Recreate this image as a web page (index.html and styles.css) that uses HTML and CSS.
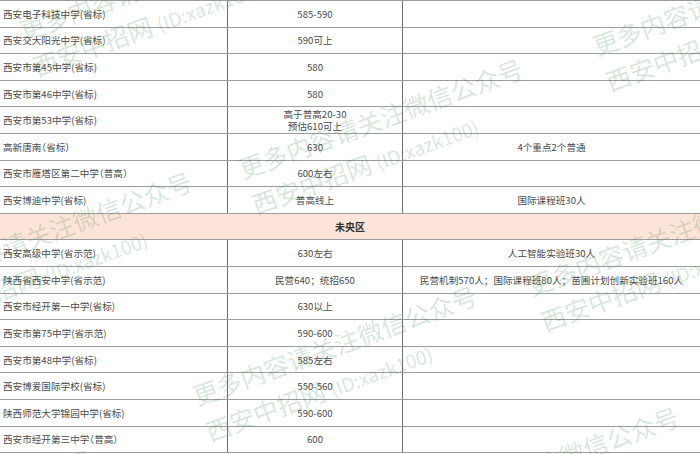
FILE: index.html
```html
<!DOCTYPE html>
<html lang="zh-CN">
<head>
<meta charset="utf-8">
<title>西安中考分数线</title>
<link rel="stylesheet" href="styles.css">
</head>
<body>
<div class="page">
  <div class="sheet">
    <div class="row"><div class="c name">西安电子科技中学(省标)</div><div class="c score">585-590</div><div class="c note"></div></div>
    <div class="row"><div class="c name">西安交大阳光中学(省标)</div><div class="c score">590可上</div><div class="c note"></div></div>
    <div class="row"><div class="c name">西安市第45中学(省标)</div><div class="c score">580</div><div class="c note"></div></div>
    <div class="row"><div class="c name">西安市第46中学(省标)</div><div class="c score">580</div><div class="c note"></div></div>
    <div class="row"><div class="c name">西安市第53中学(省标)</div><div class="c score two">高于普高20-30<br>预估610可上</div><div class="c note"></div></div>
    <div class="row"><div class="c name">高新唐南（省标）</div><div class="c score">630</div><div class="c note">4个重点2个普通</div></div>
    <div class="row"><div class="c name">西安市雁塔区第二中学（普高）</div><div class="c score">600左右</div><div class="c note"></div></div>
    <div class="row"><div class="c name">西安博迪中学(省标)</div><div class="c score">普高线上</div><div class="c note">国际课程班30人</div></div>
    <div class="row region"><div class="c full">未央区</div></div>
    <div class="row"><div class="c name">西安高级中学(省示范)</div><div class="c score">630左右</div><div class="c note">人工智能实验班30人</div></div>
    <div class="row"><div class="c name">陕西省西安中学(省示范)</div><div class="c score">民营640；统招650</div><div class="c note">民营机制570人；国际课程班80人；苗圃计划创新实验班160人</div></div>
    <div class="row"><div class="c name">西安市经开第一中学(省标)</div><div class="c score">630以上</div><div class="c note"></div></div>
    <div class="row"><div class="c name">西安市第75中学(省示范)</div><div class="c score">590-600</div><div class="c note"></div></div>
    <div class="row"><div class="c name">西安市第48中学(省标)</div><div class="c score">585左右</div><div class="c note"></div></div>
    <div class="row"><div class="c name">西安博爱国际学校(省标)</div><div class="c score">550-560</div><div class="c note"></div></div>
    <div class="row"><div class="c name">陕西师范大学锦园中学(省标)</div><div class="c score">590-600</div><div class="c note"></div></div>
    <div class="row"><div class="c name">西安市经开第三中学（普高）</div><div class="c score">600</div><div class="c note"></div></div>
  </div>

  <div class="wm" style="left:14px;top:13px">更多内容请关注微信公众号<br>西安中招网 <span class="id">(ID:xazk100)</span></div>
  <div class="wm" style="left:587px;top:28px">更多内容请关注微信公众号<br>西安中招网 <span class="id">(ID:xazk100)</span></div>
  <div class="wm" style="left:233px;top:151px">更多内容请关注微信公众号<br>西安中招网 <span class="id">(ID:xazk100)</span></div>
  <div class="wm" style="left:-98px;top:264px">更多内容请关注微信公众号<br>西安中招网 <span class="id">(ID:xazk100)</span></div>
  <div class="wm" style="left:522px;top:268px">更多内容请关注微信公众号<br>西安中招网 <span class="id">(ID:xazk100)</span></div>
  <div class="wm" style="left:187px;top:378px">更多内容请关注微信公众号<br>西安中招网 <span class="id">(ID:xazk100)</span></div>
  <div class="wm" style="left:389px;top:499px">更多内容请关注微信公众号<br>西安中招网 <span class="id">(ID:xazk100)</span></div>
  <div class="wm" style="left:-197px;top:542px">更多内容请关注微信公众号<br>西安中招网 <span class="id">(ID:xazk100)</span></div>
</div>
</body>
</html>
```

FILE: styles.css
```css
* { box-sizing: border-box; }

html, body {
  margin: 0;
  padding: 0;
  background: #ffffff;
}

.page {
  position: relative;
  width: 700px;
  height: 454px;
  overflow: hidden;
  font-family: "Noto Sans CJK SC", "Noto Sans", sans-serif;
  color: #4a4a4a;
}

.sheet {
  display: flex;
  flex-direction: column;
  border-top: 1px solid #9c9c9c;
}

.row {
  display: grid;
  grid-template-columns: 228px 175px 297px;
  height: 26.6px;
  border-bottom: 1px solid #9c9c9c;
}

.c {
  display: flex;
  align-items: center;
  font-size: 9.6px;
  line-height: 12px;
  white-space: nowrap;
}

.name {
  padding-left: 3px;
  border-right: 1px solid #6f6f6f;
  font-feature-settings: "halt";
}

.score {
  justify-content: center;
  text-align: center;
  border-right: 1px solid #6f6f6f;
}

.note {
  justify-content: center;
}

.region {
  grid-template-columns: 1fr;
  background: #fde4d8;
}

.full {
  justify-content: center;
  font-weight: bold;
  color: #333333;
  font-size: 10px;
}

.wm {
  position: absolute;
  transform-origin: 0 0;
  transform: rotate(-20deg);
  white-space: nowrap;
  font-family: "Noto Sans CJK SC", sans-serif;
  font-size: 25px;
  line-height: 38px;
  color: rgba(50, 130, 70, 0.2);
  pointer-events: none;
}

.wm .id {
  font-size: 19px;
}
```
